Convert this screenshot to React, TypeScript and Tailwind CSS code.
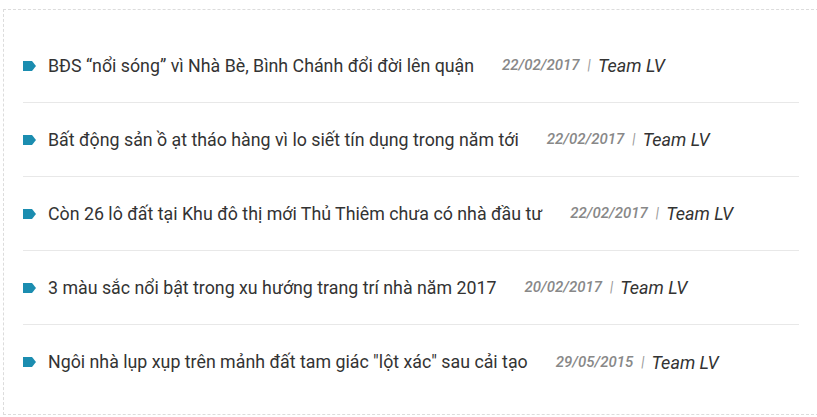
const posts = [
  { title: "BĐS “nổi sóng” vì Nhà Bè, Bình Chánh đổi đời lên quận", date: "22/02/2017", author: "Team LV" },
  { title: "Bất động sản ồ ạt tháo hàng vì lo siết tín dụng trong năm tới", date: "22/02/2017", author: "Team LV" },
  { title: "Còn 26 lô đất tại Khu đô thị mới Thủ Thiêm chưa có nhà đầu tư", date: "22/02/2017", author: "Team LV" },
  { title: "3 màu sắc nổi bật trong xu hướng trang trí nhà năm 2017", date: "20/02/2017", author: "Team LV" },
  { title: "Ngôi nhà lụp xụp trên mảnh đất tam giác \"lột xác\" sau cải tạo", date: "29/05/2015", author: "Team LV" },
];

function TagIcon() {
  return (
    <svg width="13" height="10" viewBox="0 0 13 10" className="shrink-0">
      <path d="M0 0H9L13 5L9 10H0Z" fill="#1b8db0" />
    </svg>
  );
}

export default function App() {
  return (
    <div className="min-h-[417px] bg-white pt-[9px] pl-[3px] font-['Roboto',sans-serif]">
      <div className="w-[816px] border border-dashed border-[#dcdcdc] px-[19px] pt-[19px] pb-[15px]">
        <ul>
          {posts.map((post, i) => (
            <li
              key={post.title}
              className={
                "flex h-[74px] items-center " +
                (i < posts.length - 1 ? "border-b border-[#e8e8e8]" : "")
              }
            >
              <TagIcon />
              <a href="#" className="ml-[12px] text-[17.8px] text-[#333] leading-6">
                {post.title}
              </a>
              <span className="ml-[28px] text-[15px] font-medium italic text-[#888]">{post.date}</span>
              <span className="ml-[8px] mr-[7px] text-[14px] italic text-[#999]">|</span>
              <span className="text-[18px] italic text-[#333]">{post.author}</span>
            </li>
          ))}
        </ul>
      </div>
    </div>
  );
}
